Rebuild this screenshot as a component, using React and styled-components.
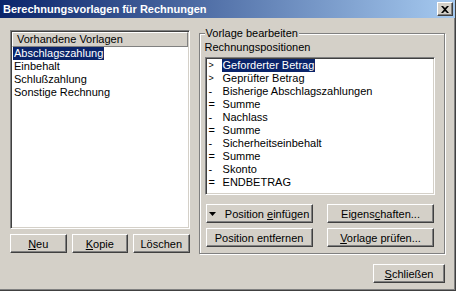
import React from 'react';
import styled, { createGlobalStyle } from 'styled-components';

const GlobalStyle = createGlobalStyle`
  html, body {
    margin: 0;
    padding: 0;
    background: #d4d0c8;
  }
  body {
    font-family: "Liberation Sans", Arial, sans-serif;
    font-size: 11px;
    color: #000;
  }
`;

const Window = styled.div`
  width: 456px;
  height: 291px;
  box-sizing: border-box;
  background: #d4d0c8;
  border-right: 1px solid #404040;
  border-bottom: 1px solid #404040;
  box-shadow: inset -1px -1px #808080;
  display: flex;
  flex-direction: column;
  overflow: hidden;
`;

const TitleBar = styled.div`
  height: 18px;
  flex: none;
  display: flex;
  align-items: center;
  justify-content: space-between;
  padding: 0 2px 0 3px;
  background: linear-gradient(to right, #0a246a, #a6caf0);
`;

const Title = styled.span`
  color: #fff;
  font-weight: bold;
  font-size: 11px;
`;

const CloseButton = styled.button`
  width: 16px;
  height: 14px;
  padding: 0;
  box-sizing: border-box;
  display: flex;
  align-items: center;
  justify-content: center;
  background: #d4d0c8;
  border: 1px solid;
  border-color: #fff #404040 #404040 #fff;
  box-shadow: inset -1px -1px #808080;
`;

const Body = styled.div`
  display: flex;
  align-items: flex-start;
  gap: 9px;
  padding: 12px 10px 0 10px;
`;

const LeftPanel = styled.div`
  width: 180px;
  display: flex;
  flex-direction: column;
  gap: 5px;
`;

const ListBox = styled.div`
  height: ${({ h }) => h}px;
  box-sizing: border-box;
  background: #fff;
  border: 1px solid;
  border-color: #808080 #fff #fff #808080;
  box-shadow: inset 1px 1px #404040, inset -1px -1px #d4d0c8;
  padding: 1px 2px 2px 1px;
  display: flex;
  flex-direction: column;
`;

const ListHeader = styled.div`
  height: 15px;
  box-sizing: border-box;
  background: #d4d0c8;
  border: 1px solid;
  border-color: #fff #808080 #808080 #fff;
  line-height: 13px;
  padding-left: 4px;
  margin-right: -1px;
`;

const Item = styled.div`
  height: 13px;
  line-height: 13px;
  padding-left: ${({ pad }) => pad}px;
  display: flex;
  white-space: nowrap;
`;

const ItemText = styled.span`
  padding: 0 1px;
  background: ${({ selected }) => (selected ? '#0a246a' : 'transparent')};
  color: ${({ selected }) => (selected ? '#fff' : '#000')};
`;

const Sym = styled.span`
  width: 13px;
  flex: none;
  font-size: ${({ small }) => (small ? '9px' : '11px')};
`;

const ButtonRow = styled.div`
  display: grid;
  grid-template-columns: ${({ cols }) => cols};
  justify-content: space-between;
  gap: ${({ gap }) => gap}px;
  padding: ${({ pad }) => pad || '0'};
`;

const Button = styled.button`
  height: 19px;
  width: ${({ w }) => (w ? `${w}px` : 'auto')};
  box-sizing: border-box;
  padding: 0;
  background: #d4d0c8;
  border: 1px solid;
  border-color: #fff #404040 #404040 #fff;
  box-shadow: inset -1px -1px #808080;
  font-family: "Liberation Sans", Arial, sans-serif;
  font-size: 11px;
  color: #000;
  display: flex;
  align-items: center;
  justify-content: center;
  gap: 9px;
  white-space: nowrap;
`;

const GroupBox = styled.div`
  width: 247px;
  box-sizing: border-box;
  margin-top: 3px;
  border: 1px solid #808080;
  box-shadow: inset 1px 1px #fff, 1px 1px #fff;
  padding: 0 9px 6px 5px;
  display: flex;
  flex-direction: column;
`;

const Legend = styled.div`
  align-self: flex-start;
  margin-top: -7px;
  height: 13px;
  line-height: 13px;
  padding: 0 1px;
  background: #d4d0c8;
`;

const Label = styled.div`
  height: 13px;
  line-height: 13px;
  margin: 1px 0 3px;
`;

const Stack = styled.div`
  display: flex;
  flex-direction: column;
  gap: 5px;
  margin-top: 9px;
`;

const Footer = styled.div`
  display: flex;
  justify-content: flex-end;
  padding: 10px 10px 0 0;
`;

const Triangle = () => (
  <svg width="7" height="4" viewBox="0 0 7 4">
    <polygon points="0,0 7,0 3.5,4" fill="#000" />
  </svg>
);

const CloseIcon = () => (
  <svg width="8" height="7" viewBox="0 0 8 7">
    <path d="M0 0h2l2 2 2-2h2L5 3.5 8 7H6L4 5 2 7H0l3-3.5z" fill="#000" />
  </svg>
);

const templates = ['Abschlagszahlung', 'Einbehalt', 'Schlußzahlung', 'Sonstige Rechnung'];

const positions = [
  ['>', 'Geforderter Betrag'],
  ['>', 'Geprüfter Betrag'],
  ['-', 'Bisherige Abschlagszahlungen'],
  ['=', 'Summe'],
  ['-', 'Nachlass'],
  ['=', 'Summe'],
  ['-', 'Sicherheitseinbehalt'],
  ['=', 'Summe'],
  ['-', 'Skonto'],
  ['=', 'ENDBETRAG'],
];

export default function App() {
  return (
    <>
      <GlobalStyle />
      <Window>
        <TitleBar>
          <Title>Berechnungsvorlagen für Rechnungen</Title>
          <CloseButton>
            <CloseIcon />
          </CloseButton>
        </TitleBar>
        <Body>
          <LeftPanel>
            <ListBox h={199}>
              <ListHeader>Vorhandene Vorlagen</ListHeader>
              {templates.map((t, i) => (
                <Item key={t} pad={1}>
                  <ItemText selected={i === 0}>{t}</ItemText>
                </Item>
              ))}
            </ListBox>
            <ButtonRow cols="1fr 1fr 1fr" gap={5}>
              <Button><span><u>N</u>eu</span></Button>
              <Button><span><u>K</u>opie</span></Button>
              <Button>Löschen</Button>
            </ButtonRow>
          </LeftPanel>
          <GroupBox>
            <Legend>Vorlage bearbeiten</Legend>
            <Label>Rechnungspositionen</Label>
            <ListBox h={138}>
              {positions.map(([s, t], i) => (
                <Item key={i} pad={2}>
                  <Sym small={s === '>'}>{s}</Sym>
                  <ItemText selected={i === 0}>{t}</ItemText>
                </Item>
              ))}
            </ListBox>
            <Stack>
              <ButtonRow cols="107px 107px" pad="0 1px">
                <Button><Triangle /><span>Position <u>e</u>infügen</span></Button>
                <Button><span>Eigens<u>c</u>haften...</span></Button>
              </ButtonRow>
              <ButtonRow cols="107px 107px" pad="0 1px">
                <Button>Position entfernen</Button>
                <Button><span><u>V</u>orlage prüfen...</span></Button>
              </ButtonRow>
            </Stack>
          </GroupBox>
        </Body>
        <Footer>
          <Button w={72}><span><u>S</u>chließen</span></Button>
        </Footer>
      </Window>
    </>
  );
}
